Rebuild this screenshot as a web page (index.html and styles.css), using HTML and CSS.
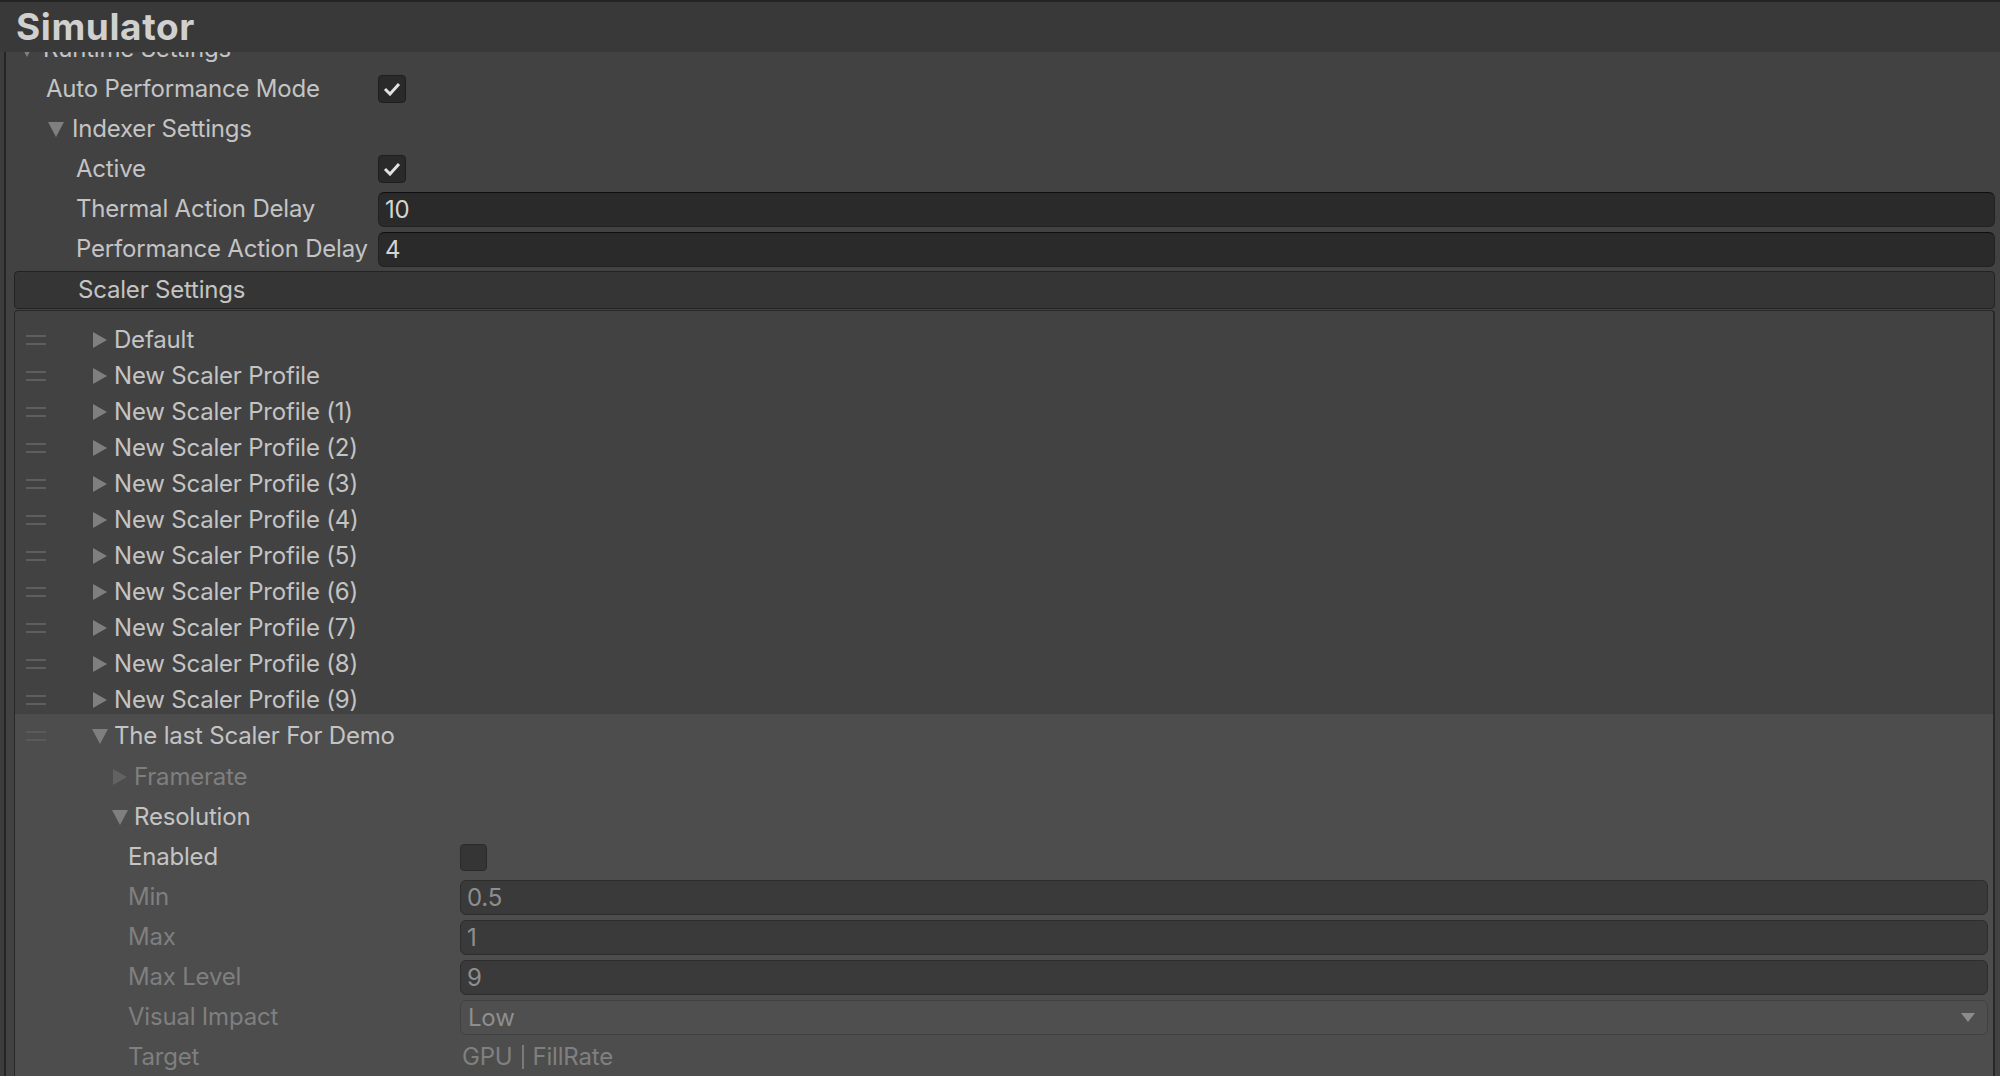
FILE: index.html
```html
<!DOCTYPE html>
<html>
<head>
<meta charset="utf-8">
<link rel="stylesheet" href="styles.css">
</head>
<body>
<div class="topstrip"></div>
<div class="titlebar">Simulator</div>
<div class="viewport">
  <div class="scroll">
    <div class="row pl-13">
      <div class="fold"><svg class="tri" viewBox="0 0 16 16"><polygon points="0,1 16,1 8,16"/></svg><span>Runtime Settings</span></div>
    </div>
    <div class="row">
      <div class="label pl-40">Auto Performance Mode</div>
      <div class="checkbox"><svg width="18" height="14" viewBox="0 0 18 14"><path d="M2 7 L7 12 L16 2" fill="none" stroke="#e2e2e2" stroke-width="3"/></svg></div>
    </div>
    <div class="row pl-42">
      <div class="fold"><svg class="tri" viewBox="0 0 16 16"><polygon points="0,1 16,1 8,16"/></svg><span>Indexer Settings</span></div>
    </div>
    <div class="row">
      <div class="label pl-70">Active</div>
      <div class="checkbox"><svg width="18" height="14" viewBox="0 0 18 14"><path d="M2 7 L7 12 L16 2" fill="none" stroke="#e2e2e2" stroke-width="3"/></svg></div>
    </div>
    <div class="row">
      <div class="label pl-70">Thermal Action Delay</div>
      <div class="field">10</div>
    </div>
    <div class="row">
      <div class="label pl-70">Performance Action Delay</div>
      <div class="field">4</div>
    </div>

    <div class="section-head">Scaler Settings</div>
    <div class="list">
      <div class="item"><div class="handle"></div><div class="fold ml-46"><svg class="tri sm" viewBox="0 0 16 16"><polygon points="1,0 15,8 1,16"/></svg><span>Default</span></div></div>
      <div class="item"><div class="handle"></div><div class="fold ml-46"><svg class="tri sm" viewBox="0 0 16 16"><polygon points="1,0 15,8 1,16"/></svg><span>New Scaler Profile</span></div></div>
      <div class="item"><div class="handle"></div><div class="fold ml-46"><svg class="tri sm" viewBox="0 0 16 16"><polygon points="1,0 15,8 1,16"/></svg><span>New Scaler Profile (1)</span></div></div>
      <div class="item"><div class="handle"></div><div class="fold ml-46"><svg class="tri sm" viewBox="0 0 16 16"><polygon points="1,0 15,8 1,16"/></svg><span>New Scaler Profile (2)</span></div></div>
      <div class="item"><div class="handle"></div><div class="fold ml-46"><svg class="tri sm" viewBox="0 0 16 16"><polygon points="1,0 15,8 1,16"/></svg><span>New Scaler Profile (3)</span></div></div>
      <div class="item"><div class="handle"></div><div class="fold ml-46"><svg class="tri sm" viewBox="0 0 16 16"><polygon points="1,0 15,8 1,16"/></svg><span>New Scaler Profile (4)</span></div></div>
      <div class="item"><div class="handle"></div><div class="fold ml-46"><svg class="tri sm" viewBox="0 0 16 16"><polygon points="1,0 15,8 1,16"/></svg><span>New Scaler Profile (5)</span></div></div>
      <div class="item"><div class="handle"></div><div class="fold ml-46"><svg class="tri sm" viewBox="0 0 16 16"><polygon points="1,0 15,8 1,16"/></svg><span>New Scaler Profile (6)</span></div></div>
      <div class="item"><div class="handle"></div><div class="fold ml-46"><svg class="tri sm" viewBox="0 0 16 16"><polygon points="1,0 15,8 1,16"/></svg><span>New Scaler Profile (7)</span></div></div>
      <div class="item"><div class="handle"></div><div class="fold ml-46"><svg class="tri sm" viewBox="0 0 16 16"><polygon points="1,0 15,8 1,16"/></svg><span>New Scaler Profile (8)</span></div></div>
      <div class="item"><div class="handle"></div><div class="fold ml-46"><svg class="tri sm" viewBox="0 0 16 16"><polygon points="1,0 15,8 1,16"/></svg><span>New Scaler Profile (9)</span></div></div>
      <div class="selected">
        <div class="item"><div class="handle faint"></div><div class="fold ml-46"><svg class="tri sm" viewBox="0 0 16 16"><polygon points="0,1 16,1 8,16"/></svg><span>The last Scaler For Demo</span></div></div>
        <div class="row first pl-97">
          <div class="fold dis"><svg class="tri sm dim" viewBox="0 0 16 16"><polygon points="1,0 15,8 1,16"/></svg><span>Framerate</span></div>
        </div>
        <div class="row pl-97">
          <div class="fold"><svg class="tri sm" viewBox="0 0 16 16"><polygon points="0,1 16,1 8,16"/></svg><span>Resolution</span></div>
        </div>
        <div class="row">
          <div class="label wide">Enabled</div>
          <div class="checkbox off"></div>
        </div>
        <div class="row">
          <div class="label wide dis">Min</div>
          <div class="field off">0.5</div>
        </div>
        <div class="row">
          <div class="label wide dis">Max</div>
          <div class="field off">1</div>
        </div>
        <div class="row">
          <div class="label wide dis">Max Level</div>
          <div class="field off">9</div>
        </div>
        <div class="row">
          <div class="label wide dis">Visual Impact</div>
          <div class="dropdown"><span>Low</span><svg width="14" height="9" viewBox="0 0 14 9"><polygon points="0,0 14,0 7,9" fill="#8c8c8c"/></svg></div>
        </div>
        <div class="row">
          <div class="label wide dis">Target</div>
          <div class="flags"><span>GPU</span><span class="sep"></span><span>FillRate</span></div>
        </div>
      </div>
    </div>
  </div>
</div>
</body>
</html>
```

FILE: styles.css
```css
* { box-sizing: border-box; }
html, body { margin: 0; padding: 0; }
body {
  width: 2000px;
  height: 1076px;
  overflow: hidden;
  background: #3d3d3d;
  font-family: Inter, "Noto Sans", sans-serif;
  font-size: 24px;
  letter-spacing: -0.2px;
  color: #c4c4c4;
}
.topstrip { height: 2px; background: #232323; }
.titlebar {
  height: 50px;
  background: #393939;
  font-weight: 700;
  font-size: 37px;
  letter-spacing: 0.6px;
  line-height: 50px;
  color: #d0d0d0;
  padding-left: 16px;
}
.viewport {
  height: 1024px;
  overflow: hidden;
  margin-left: 4px;
  border-left: 2px solid #252525;
  background: #424242;
}
.scroll { margin-top: -23px; padding-right: 5px; }
.row {
  height: 40px;
  display: flex;
  align-items: center;
  white-space: nowrap;
  line-height: 40px;
}
.pl-13 { padding-left: 13px; }
.pl-40 { padding-left: 40px; }
.pl-42 { padding-left: 42px; }
.pl-70 { padding-left: 70px; }
.pl-97 { padding-left: 97px; }
.ml-46 { margin-left: 46px; }
.label { flex: 0 0 372px; overflow: hidden; }
.label.wide { flex: 0 0 445px; padding-left: 113px; }
.fold { display: flex; align-items: center; }
.tri { width: 16px; height: 16px; margin-right: 8px; fill: #7f7f7f; flex: none; }
.tri.sm { margin-right: 6px; }
.tri.dim { fill: #626262; }
.dis { color: #7f7f7f; }
.checkbox {
  width: 28px;
  height: 28px;
  background: #2a2a2a;
  border: 1px solid #1e1e1e;
  border-radius: 4px;
  display: flex;
  align-items: center;
  justify-content: center;
}
.checkbox.off {
  width: 27px;
  height: 27px;
  background: #353535;
  border-color: #2b2b2b;
}
.field {
  flex: 1;
  height: 35px;
  background: #2a2a2a;
  border: 1px solid #222222;
  border-top-color: #0f0f0f;
  border-radius: 6px;
  padding-left: 6px;
  line-height: 33px;
  color: #d4d4d4;
}
.field.off {
  background: #3a3a3a;
  border-color: #2d2d2d;
  color: #8e8e8e;
  margin-right: 5px;
}
.dropdown {
  flex: 1;
  height: 35px;
  margin-right: 5px;
  background: #4f4f4f;
  border: 1px solid #414141;
  border-radius: 6px;
  padding: 0 12px 0 7px;
  line-height: 33px;
  color: #8e8e8e;
  display: flex;
  align-items: center;
  justify-content: space-between;
}
.flags { display: flex; align-items: center; color: #808080; padding-left: 2px; }
.sep { width: 2px; height: 24px; background: #7a7a7a; margin: 0 9px 0 9px; }
.section-head {
  margin: 2px 0 0 8px;
  height: 38px;
  background: #353535;
  border: 1px solid #232323;
  border-radius: 4px;
  padding-left: 63px;
  line-height: 36px;
  color: #c4c4c4;
}
.list {
  margin: 1px 0 0 8px;
  border: 1px solid #282828;
  border-right-width: 2px;
  border-radius: 4px 4px 0 0;
  padding-top: 11px;
}
.item {
  height: 36px;
  display: flex;
  align-items: center;
  white-space: nowrap;
  line-height: 36px;
}
.handle {
  margin-left: 11px;
  width: 20px;
  height: 10px;
  border-top: 2px solid #5e5e5e;
  border-bottom: 2px solid #5e5e5e;
  flex: none;
}
.handle.faint { border-color: #5a5a5a; }
.selected {
  background: #4d4d4d;
  margin-top: -4px;
  padding-top: 4px;
  padding-bottom: 40px;
}
.row.first { margin-top: 3px; }
```
